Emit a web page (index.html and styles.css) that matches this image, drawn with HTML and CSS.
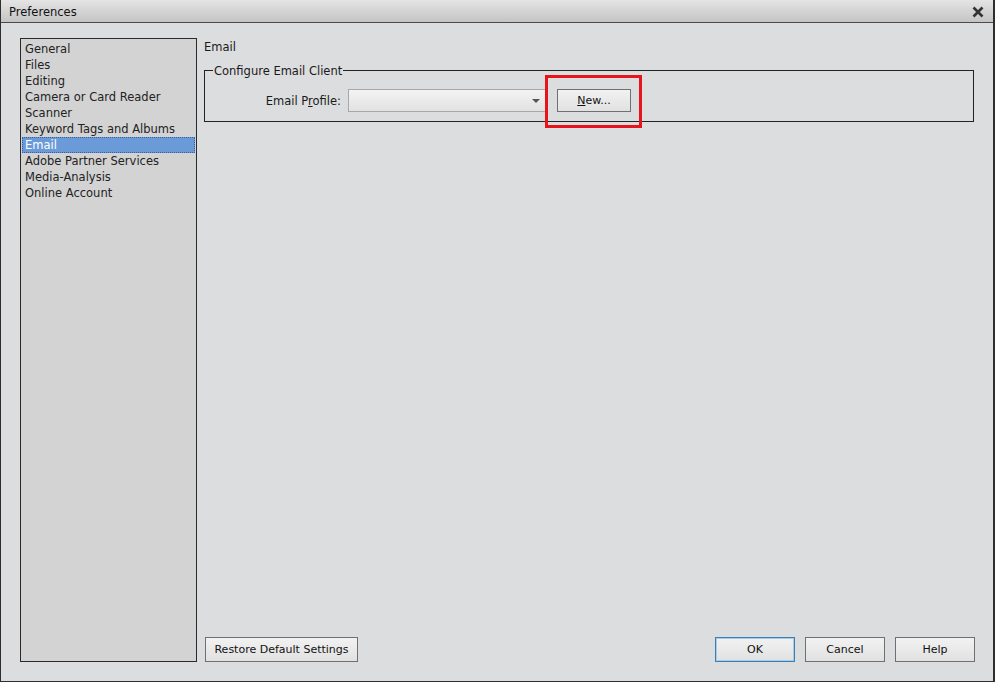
FILE: index.html
```html
<!DOCTYPE html>
<html>
<head>
<meta charset="utf-8">
<link rel="stylesheet" href="styles.css">
</head>
<body>
<div class="window">
  <div class="titlebar">
    <span class="title">Preferences</span>
    <svg class="close" width="12" height="12" viewBox="0 0 12 12"><path d="M1.5 1.5 L10.5 10.5 M10.5 1.5 L1.5 10.5" stroke="#333" stroke-width="2.6" stroke-linecap="butt"/></svg>
  </div>
  <div class="main">
    <ul class="sidebar">
      <li>General</li>
      <li>Files</li>
      <li>Editing</li>
      <li>Camera or Card Reader</li>
      <li>Scanner</li>
      <li>Keyword Tags and Albums</li>
      <li class="selected">Email</li>
      <li>Adobe Partner Services</li>
      <li>Media-Analysis</li>
      <li>Online Account</li>
    </ul>
    <div class="content">
      <div class="heading">Email</div>
      <fieldset class="group">
        <legend>Configure Email Client</legend>
        <div class="row">
          <label class="label">Email P<u>r</u>ofile:</label>
          <div class="select"><span class="arrow"></span></div>
          <div class="new-wrap">
            <button class="btn new"><u>N</u>ew...</button>
            <span class="highlight"></span>
          </div>
        </div>
      </fieldset>
      <div class="footer">
        <button class="btn restore">Restore Default Settings</button>
        <div class="right-buttons">
          <button class="btn ok">OK</button>
          <button class="btn cancel">Cancel</button>
          <button class="btn help">Help</button>
        </div>
      </div>
    </div>
  </div>
</div>
</body>
</html>
```
FILE: styles.css
```css
html, body {
  margin: 0;
  padding: 0;
}
body {
  width: 995px;
  height: 682px;
  background: #dcdddf;
  font-family: "DejaVu Sans", Tahoma, sans-serif;
  font-size: 11.5px;
  color: #1a1a1a;
  overflow: hidden;
}
.window {
  box-sizing: border-box;
  width: 995px;
  height: 682px;
  border-left: 1px solid #2e2e2e;
  border-right: 2px solid #2e2e2e;
  border-bottom: 1px solid #2e2e2e;
  display: flex;
  flex-direction: column;
  background: #dcdddf;
}
.titlebar {
  height: 22px;
  border-bottom: 1px solid #4a4a4a;
  background: linear-gradient(#e4e4e4, #c4c4c4);
  display: flex;
  align-items: center;
  justify-content: space-between;
  padding: 0 9px 0 8px;
}
.title {
  font-size: 11.5px;
  color: #111;
  padding-top: 2px;
}
.close {
  display: block;
  margin-top: 1px;
}
.main {
  flex: 1;
  display: flex;
  padding: 15px 18px 19px 19px;
  gap: 7px;
}
.sidebar {
  list-style: none;
  margin: 0;
  padding: 2px 1px;
  box-sizing: border-box;
  width: 177px;
  border: 1px solid #2a2a2a;
  background: #d3d3d3;
}
.sidebar li {
  height: 16px;
  line-height: 16px;
  padding-left: 3px;
  white-space: nowrap;
  color: #222;
}
.sidebar li.selected {
  background: #6a9ad8;
  color: #fff;
  outline: 1px dotted #3a5f98;
  outline-offset: -1px;
}
.content {
  flex: 1;
  display: flex;
  flex-direction: column;
}
.heading {
  line-height: 16px;
  padding-top: 1px;
}
.group {
  margin: 8px 1px 0 0;
  padding: 12px 0 9px 0;
  border: 1px solid #222;
  min-width: 0;
}
.group legend {
  padding: 0 1px;
  margin-left: 8px;
  line-height: 14px;
  position: relative;
  top: 1px;
}
.row {
  display: flex;
  align-items: center;
  height: 23px;
}
.label {
  width: 136px;
  text-align: right;
  padding-right: 7px;
}
.select {
  position: relative;
  width: 199px;
  height: 23px;
  box-sizing: border-box;
  border: 1px solid #a8a8a8;
  background: linear-gradient(#f3f3f3, #e2e2e2);
}
.select .arrow {
  position: absolute;
  right: 6px;
  top: 9px;
  width: 0;
  height: 0;
  border-left: 4px solid transparent;
  border-right: 4px solid transparent;
  border-top: 4px solid #555;
}
.new-wrap {
  position: relative;
  margin-left: 10px;
}
.btn {
  font-family: "DejaVu Sans", Tahoma, sans-serif;
  font-size: 11px;
  color: #111;
  background: linear-gradient(#f2f2f2, #e1e1e1);
  border: 1px solid #707070;
  border-radius: 0;
  padding: 0;
  height: 23px;
  box-sizing: border-box;
  display: block;
}
.new {
  width: 74px;
}
.highlight {
  position: absolute;
  left: -12px;
  top: -14px;
  width: 97px;
  height: 53px;
  box-sizing: border-box;
  border: 3px solid #e8141c;
}
.footer {
  margin-top: auto;
  display: flex;
  justify-content: space-between;
  align-items: flex-end;
  padding-left: 1px;
}
.restore {
  width: 153px;
  height: 25px;
}
.right-buttons {
  display: flex;
  gap: 10px;
}
.right-buttons .btn {
  width: 80px;
  height: 25px;
}
.ok {
  border: 1px solid #3c7fb1 !important;
  box-shadow: inset 0 0 0 1px #a8cbe8;
}
```
